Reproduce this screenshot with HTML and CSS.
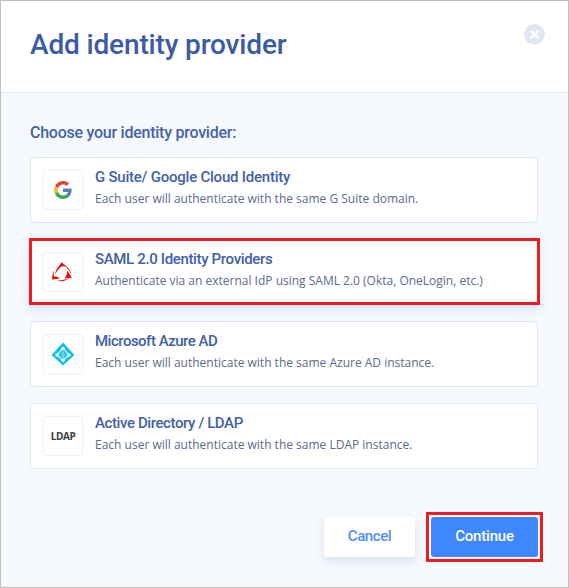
FILE: index.html
```html
<!DOCTYPE html>
<html lang="en">
<head>
<meta charset="utf-8">
<title>Add identity provider</title>
<link rel="stylesheet" href="styles.css">
</head>
<body>
<main class="dialog">
  <header class="header">
    <h1 class="title">Add identity provider</h1>
    <button class="close" aria-label="Close">
      <svg width="21" height="21" viewBox="0 0 21 21"><circle cx="10.5" cy="10.5" r="10.4" fill="#dfe7f4"/><path d="M7.300 7.300l6.400 6.400M13.700 7.300l-6.400 6.400" stroke="#fff" stroke-width="2.400" stroke-linecap="round"/></svg>
    </button>
  </header>
  <section class="content">
    <h2 class="subtitle">Choose your identity provider:</h2>
    <div class="list">
      <article class="card">
        <div class="logo">
          <svg width="18" height="18" viewBox="0 0 48 48"><path fill="#e04338" d="M24 9.5c3.54 0 6.71 1.22 9.21 3.6l6.85-6.85C35.9 2.38 30.47 0 24 0 14.62 0 6.51 5.38 2.56 13.22l7.98 6.19C12.43 13.72 17.74 9.5 24 9.5z"/><path fill="#5a7fb8" d="M46.98 24.55c0-1.57-.15-3.09-.38-4.55H24v9.02h12.94c-.58 2.96-2.26 5.48-4.78 7.18l7.73 6c4.51-4.18 7.09-10.36 7.09-17.65z"/><path fill="#f8b92b" d="M10.53 28.59c-.48-1.45-.76-2.99-.76-4.59s.27-3.14.76-4.59l-7.98-6.19C.92 16.46 0 20.12 0 24c0 3.88.92 7.54 2.56 10.78l7.97-6.19z"/><path fill="#32a853" d="M24 48c6.48 0 11.93-2.13 15.89-5.81l-7.73-6c-2.15 1.45-4.92 2.3-8.16 2.3-6.26 0-11.57-4.22-13.47-9.91l-7.98 6.19C6.51 42.62 14.62 48 24 48z"/></svg>
        </div>
        <div class="text"><h3 class="name n1">G Suite/ Google Cloud Identity</h3><p class="desc">Each user will authenticate with the same G Suite domain.</p></div>
      </article>
      <article class="card selected">
        <div class="logo">
          <svg class="saml" width="20" height="20" viewBox="0 0 20 20"><g fill="#e30b0b"><path d="M6.800 4.500L9.600.2l4.400 4.200-4.200-.2C6.800 6 4.600 9.500 3 12.400 3.500 9 4.800 6.500 6.800 4.500z"/><path d="M12 2.200C15.800 4.500 18.800 8.500 19.600 12.800 17.500 9 15.300 6 12 2.200z"/><path d="M2 8.800C.8 11.500.1 14.500 0 17.600l8-1.100-3.500-2-2.600.1c-.2-1.800-.1-3.800.1-5.800z"/><path d="M4.800 18.300c3.400 1.500 8.200 1 12-1.500-4.200 1-8 1.900-12 1.500z"/><path d="M14.800 8.600l.1 3.800-2.300 3.800 7 .1c-.9-2.900-2.700-5.600-4.800-7.700z"/></g></svg>
        </div>
        <div class="text"><h3 class="name n2">SAML 2.0 Identity Providers</h3><p class="desc">Authenticate via an external IdP using SAML 2.0 (Okta, OneLogin, etc.)</p></div>
      </article>
      <article class="card">
        <div class="logo">
          <svg width="24" height="24" viewBox="0 0 24 24"><path d="M12 .5L23.500 13 12 23.500.5 13z" fill="#12bdf0"/><path d="M12 6L6 13l6 5.500 6-5.500z" fill="#12bdf0" stroke="#fff" stroke-width="1.100"/><g fill="#fff"><circle cx="12" cy="6.500" r="1.700"/><circle cx="6" cy="13" r="1.700"/><circle cx="18" cy="13" r="1.700"/><circle cx="12" cy="18.300" r="1.700"/></g><ellipse cx="12" cy="12.800" rx="3.600" ry="3.700" fill="#36c5ed"/><path d="M12 9.300v7" stroke="#a6e3f5" stroke-width=".8"/></svg>
        </div>
        <div class="text"><h3 class="name n3">Microsoft Azure AD</h3><p class="desc">Each user will authenticate with the same Azure AD instance.</p></div>
      </article>
      <article class="card">
        <div class="logo ldap">LDAP</div>
        <div class="text"><h3 class="name n4">Active Directory / LDAP</h3><p class="desc">Each user will authenticate with the same LDAP instance.</p></div>
      </article>
    </div>
  </section>
  <footer class="footer">
    <button class="button cancel">Cancel</button>
    <div class="highlight"><button class="button continue">Continue</button></div>
  </footer>
</main>
</body>
</html>
```
FILE: styles.css
```css
* { box-sizing: border-box; }
body { margin: 0; font-family: "Open Sans", sans-serif; }
h1, h2, h3, p { margin: 0; white-space: nowrap; }
button { border: 0; padding: 0; }
svg { display: block; }
.dialog {
  width: 569px;
  height: 588px;
  border: 1px solid #c0c0c0;
  background: #f6f9fe;
  display: flex;
  flex-direction: column;
}
.header {
  height: 92px;
  flex: none;
  background: #fff;
  border-bottom: 1px solid #dce7f4;
  display: flex;
  justify-content: space-between;
  padding: 23px 23px 0 29px;
}
.title {
  font: 500 28px/42px Roboto, sans-serif;
  color: #3b5ba5;
  letter-spacing: -0.15px;
}
.close { background: none; width: 21px; height: 21px; }
.content { padding: 28px 29px 0; }
.subtitle {
  font: 500 16px/24px Roboto, sans-serif;
  color: #4562aa;
  letter-spacing: -0.25px;
}
.list { display: flex; flex-direction: column; gap: 16px; margin-top: 12px; }
.card {
  height: 66px;
  width: 508px;
  background: #fff;
  border: 1px solid #dde6f5;
  border-radius: 3px;
  padding: 12px;
  display: flex;
  gap: 12px;
}
.selected {
  width: 509px;
  height: 65px;
  margin-bottom: 1px;
  border-color: #fff;
  border-radius: 0;
  outline: 3px solid #ed1c24;
  outline-offset: -2px;
  box-shadow: 0 5px 10px #d3e2f1;
}
.logo {
  width: 40px;
  height: 40px;
  flex: none;
  border: 1px solid #eef1f7;
  border-radius: 3px;
  display: flex;
  align-items: center;
  justify-content: center;
}
.saml { margin-right: 2px; }
.ldap { font: 700 10px/12px "Open Sans", sans-serif; letter-spacing: -0.4px; color: #3c3c3c; }
.text { margin-top: -3px; }
.name {
  font: 500 15px/20px Roboto, sans-serif;
  color: #4260a9;
}
.n1 { letter-spacing: -0.23px; }
.n2 { letter-spacing: -0.35px; }
.n3 { letter-spacing: -0.5px; }
.n4 { letter-spacing: -0.4px; }
.desc { font-size: 12px; line-height: 18px; margin-top: 3px; color: #5c6b8e; }
.footer {
  display: flex;
  align-items: center;
  justify-content: flex-end;
  gap: 11px;
  margin-top: 43px;
  padding-right: 25px;
}
.button { height: 40px; border-radius: 3px; font: 500 15px/38px Roboto, sans-serif; padding-bottom: 2px; }
.cancel { width: 91px; color: #4f8df7; background: #fff; box-shadow: 0 4px 9px #d3e2ef; letter-spacing: -0.4px; }
.highlight { border: 3px solid #ed1c24; width: 117px; height: 50px; padding: 2px; }
.continue { width: 107px; background: #3f87ff; color: #fff; letter-spacing: -0.2px; }
```
